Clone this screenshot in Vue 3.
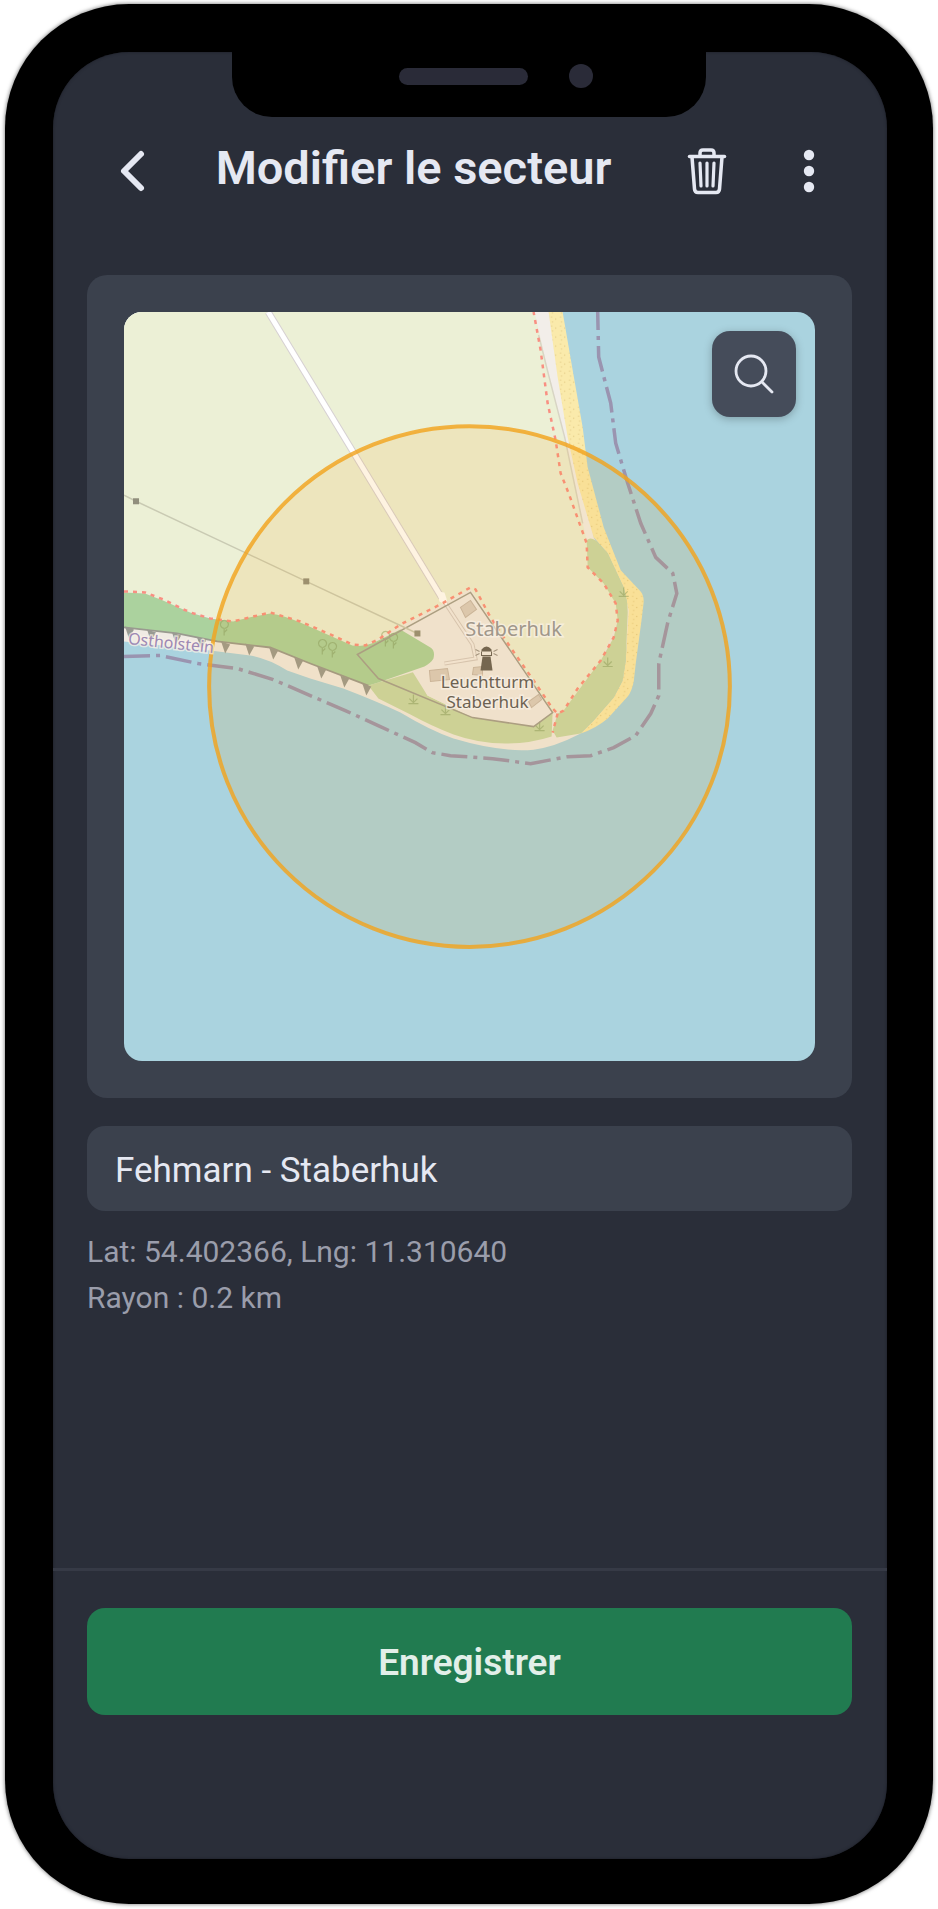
<script setup>
import { ref } from 'vue';

const name = ref('Fehmarn - Staberhuk');
const sector = { lat: 54.402366, lng: 11.31064, radius: 0.2 };

const pylons = [
    { x: 136, y: 501 },
    { x: 306, y: 581 },
    { x: 417, y: 633 }
];

const trees = [
    { x: 224, y: 628 },
    { x: 322, y: 647 },
    { x: 332, y: 650 },
    { x: 385, y: 639 },
    { x: 393, y: 641 }
];

const shrubs = [
    { x: 413, y: 703 },
    { x: 445, y: 714 },
    { x: 539, y: 730 },
    { x: 607, y: 666 },
    { x: 623, y: 596 }
];

const cliffTeeth = [
    [129, 628], [151, 631], [176, 634], [201, 639], [225, 643], [249, 645],
    [273, 649], [298, 659], [321, 668], [344, 677], [366, 685]
];

const toothPath = ([x, y]) => `M${x - 4} ${y - 2}l9 3l-5 9z`;
</script>

<template>
    <div class="page">
        <div class="phone">
            <div class="notch">
                <span class="speaker"></span>
                <span class="camera"></span>
            </div>
            <div class="screen">
                <header class="header">
                    <button class="icon-btn back" type="button" aria-label="Retour">
                        <svg width="28" height="44" viewBox="0 0 28 44">
                            <path d="M22 5L5 22l17 17" fill="none" stroke="currentColor" stroke-width="6" stroke-linecap="round" stroke-linejoin="round" />
                        </svg>
                    </button>
                    <h1 class="title">Modifier le secteur</h1>
                    <div class="actions">
                        <button class="icon-btn" type="button" aria-label="Supprimer">
                            <svg width="40" height="48" viewBox="0 0 40 48" fill="none" stroke="currentColor" stroke-linecap="round" stroke-linejoin="round">
                                <path d="M2.500 9.500H37.500" stroke-width="3.500" />
                                <path d="M13 9V6q0-3 3-3h8q3 0 3 3v3" stroke-width="3.500" />
                                <path d="M5 10l2.500 32q.3 3.500 3.500 3.500h18q3.200 0 3.500-3.500L35 10" stroke-width="3.500" />
                                <path d="M13 16l1 23M20 16v23M27 16l-1 23" stroke-width="3.200" />
                            </svg>
                        </button>
                        <button class="icon-btn" type="button" aria-label="Plus d'options">
                            <svg width="12" height="44" viewBox="0 0 12 44" fill="currentColor">
                                <circle cx="6" cy="6" r="5.200" />
                                <circle cx="6" cy="22" r="5.200" />
                                <circle cx="6" cy="38" r="5.200" />
                            </svg>
                        </button>
                    </div>
                </header>

                <main class="content">
                    <div class="map-card">
                        <div class="map">
                            <svg class="map-svg" viewBox="124 312 690 748" preserveAspectRatio="xMidYMid slice">
                                <defs>
                                    <pattern id="sand" width="9" height="9" patternUnits="userSpaceOnUse">
                                        <rect width="9" height="9" fill="#faeaab" />
                                        <circle cx="2" cy="2" r=".7" fill="#e6cf8a" />
                                        <circle cx="6" cy="4" r=".7" fill="#e6cf8a" />
                                        <circle cx="3" cy="7" r=".7" fill="#e6cf8a" />
                                    </pattern>
                                </defs>

                                <!-- eau, terre, plage -->
                                <rect x="124" y="312" width="690" height="749" fill="#aad3df" />
                                <path d="M124 312H548L593 537L630 610L622 680L580 733Q553 747 533 749Q500 752 453 738Q430 730 400 712Q377 701 343 688L310 678L287 670Q268 658 250 655L210 650L124 641Z" fill="#f0ebe4" />
                                <path d="M124 312H534L543 353L567 453L586 540L587 567L603 583L615 603L617 620L600 660L563 710L552 712L470 588L365 645L352 645L300 622L270 613L233 621L190 612L163 600L145 593L124 592Z" fill="#ecf0d6" />
                                <path d="M534 312H548L557 377L577 483L593 537L586 540L567 453Z" fill="#f2eee9" />
                                <path d="M538 335L548 375L564 437L582 523" fill="none" stroke="#d8d5c4" stroke-width="1.500" />
                                <path d="M548 312H562L572 370L582 427L587 467L603 527Q612 550 620 570L639 590Q643 594 643 601L641 618L635 663L633 681Q631 691 627 696L607 718Q595 728 580 733L593 720L613 697L622 680L625 660L628 610L623 587L607 553L593 537L577 483L567 437L557 377Z" fill="url(#sand)" />

                                <!-- herbe et bois -->
                                <path d="M586 540Q590 536 596 541L607 553L623 587Q627 600 627 612L625 660L622 680L613 697L593 720L580 733L556 737L552 730L557 713L563 710L600 660L613 637L617 620L615 603L603 583L587 567Z" fill="#c8d9a9" />
                                <path d="M368 685L415 671L427 695L472 717L533 726L552 712L551 736Q530 743 505 743Q478 743 453 734Q430 725 410 714L378 698Z" fill="#c8d9a9" />
                                <path d="M400 630L470 592L552 712L533 726L472 717L427 695L412 671Z" fill="#f0ebe6" />
                                <path d="M124 592L145 593L163 600L190 612L210 618L233 621Q252 616 270 613Q284 615 300 622L352 645Q365 647 378 640L400 629L430 647Q435 650 433 658Q431 662 424 666L378 682L368 685L310 663L270 647L217 641L177 633L124 627Z" fill="#abd29e" />
                                <path d="M124 627L177 633L217 641L270 647L310 663L368 685" fill="none" stroke="#9a9a90" stroke-width="1.800" />
                                <path v-for="tooth in cliffTeeth" :key="tooth[0]" :d="toothPath(tooth)" fill="#999a92" />

                                <g fill="none" stroke="#7f9b63" stroke-width="1.200" opacity=".5">
                                    <path v-for="t in trees" :key="t.x" :d="`M${t.x} ${t.y}v7m0-3l3-3m-3-1a4 4 0 1 1 .5 0`" />
                                    <path v-for="s in shrubs" :key="s.x" :d="`M${s.x} ${s.y}v-9m-5 9h10m-5-1l-4-4m4 4l4-4`" />
                                </g>

                                <!-- routes, clôtures, ligne électrique -->
                                <path d="M441 597L472 644L475 658L444 663L463 660" fill="none" stroke="#d3cac4" stroke-width="4" />
                                <path d="M441 597L472 644L475 658L444 663L463 660" fill="none" stroke="#f2ece8" stroke-width="2" />
                                <path d="M268 312L441 597" stroke="#d6d0d2" stroke-width="7" />
                                <path d="M268 312L441 597" stroke="#fff" stroke-width="5" />
                                <path d="M437 591l7 1l2 6l1 7l-8-4z" fill="#fff" />
                                <path d="M357 654L470 592L552 712L533 726L472 717L378 678Z" fill="none" stroke="#a29f92" stroke-width="1.500" />
                                <path d="M124 495L136 501L306 581L417 633" fill="none" stroke="#c9cab3" stroke-width="1.500" />
                                <rect v-for="p in pylons" :key="p.x" :x="p.x - 3" :y="p.y - 3" width="6" height="6" fill="#918f7d" />
                                <g fill="#d9cdc2" stroke="#c5b8ac" stroke-width="1">
                                    <path d="M460 607l10-7l6 9l-11 8z" />
                                    <path d="M429 670l18-2l2 11l-19 2z" />
                                    <path d="M473 667l9-1v9l-10-1z" />
                                    <path d="M528 701l10-7l3 5l-10 8z" />
                                </g>
                                <g fill="none" stroke="#f98f82" stroke-width="2.500" stroke-dasharray="4 5">
                                    <path d="M124 591L145 592L163 599L190 612L210 618L233 621L270 612L300 621L330 634L352 644L365 645L378 639L400 624L440 604L470 587L475 589L490 617L510 647L533 680L552 708L557 713L563 710L577 688L600 660L613 637L617 620L615 603L603 583L587 567L586 543L577 518L568 493L560 473L555 440L547 403L540 350L533 312" />
                                    <path d="M557 713L552 732" />
                                </g>
                                <path d="M124 656L160 655L198 663L237 668L273 679L310 695L345 710L380 726L415 742L432 752L450 755L492 758L530 763L567 756L590 755L613 747L635 735L650 713L658 695L658 663L667 622L676 593L672 573L655 557L640 523L627 483L615 443L610 403L598 357L597 312" fill="none" stroke="#9a94b0" stroke-width="3.500" stroke-dasharray="26 6 4 6" />

                                <!-- zone surveillée -->
                                <circle cx="469" cy="686" r="260" fill="#f59e0b" fill-opacity=".12" stroke="#f2a41f" stroke-opacity=".82" stroke-width="4" />

                                <!-- phare -->
                                <g fill="#75664f">
                                    <path d="M481 649q5-6 10 0v2h-10z" />
                                    <path d="M482 656h8l2 14h-12z" />
                                    <path d="M481 651v4h10v-4" fill="none" stroke="#75664f" />
                                    <path d="M479 651l-4-2M479 653l-4 2M493 651l4-2M493 653l4 2" stroke="#a3937c" />
                                </g>

                                <g class="label">
                                    <text x="513" y="636" font-size="20" fill="#a0978a">Staberhuk</text>
                                    <text x="487" y="687" font-size="17" fill="#6d6252">Leuchtturm</text>
                                    <text x="487" y="707" font-size="17" fill="#6d6252">Staberhuk</text>
                                    <text x="171" y="648" font-size="16" fill="#9d88b4" transform="rotate(6 171 643)">Ostholstein</text>
                                </g>
                            </svg>
                            <button class="search-btn" type="button" aria-label="Rechercher">
                                <svg width="40" height="40" viewBox="0 0 40 40" fill="none" stroke="currentColor" stroke-width="2.800" stroke-linecap="round">
                                    <circle cx="17" cy="17" r="15" />
                                    <path d="M28 28l10 10" />
                                </svg>
                            </button>
                        </div>
                    </div>

                    <input v-model="name" class="name-input" type="text" aria-label="Nom du secteur" />
                    <div class="meta">
                        <p>Lat: {{ sector.lat.toFixed(6) }}, Lng: {{ sector.lng.toFixed(6) }}</p>
                        <p>Rayon : {{ sector.radius }} km</p>
                    </div>
                </main>

                <footer class="footer">
                    <button class="save-btn" type="button">Enregistrer</button>
                </footer>
            </div>
        </div>
    </div>
</template>

<style>
body {
    background: #fff;
}
</style>

<style scoped>
* {
    box-sizing: border-box;
}

.page {
    display: flex;
    min-height: 100vh;
    padding: 4px 5px 5px;
    font-family: Roboto, "Liberation Sans", sans-serif;
    color: #e5e8f2;
}

.phone {
    position: relative;
    display: flex;
    flex: 1;
    min-width: 0;
    padding: 48px 46px 45px 48px;
    background: #000;
    border-radius: 124px;
    box-shadow: 0 0 4px rgba(0, 0, 0, 0.6);
}

.notch {
    position: absolute;
    top: 0;
    left: 50%;
    width: 474px;
    height: 113px;
    transform: translateX(-50%);
    background: #000;
    border-radius: 0 0 40px 40px;
}

.speaker {
    position: absolute;
    top: 64px;
    left: 167px;
    width: 129px;
    height: 17px;
    border-radius: 9px;
    background: #2a2b38;
}

.camera {
    position: absolute;
    top: 60px;
    left: 337px;
    width: 24px;
    height: 24px;
    border-radius: 50%;
    background: #2a2b38;
}

.screen {
    display: flex;
    flex: 1;
    flex-direction: column;
    min-width: 0;
    padding-top: 65px;
    background: #2a2e39;
    border-radius: 76px;
    box-shadow: inset 0 0 3px #1c1e27;
}

.header {
    display: flex;
    align-items: center;
    height: 108px;
    padding: 0 41px 0 56px;
}

.icon-btn {
    display: flex;
    align-items: center;
    justify-content: center;
    width: 74px;
    height: 74px;
    padding: 0;
    border: none;
    background: none;
    color: #e5e8f2;
    cursor: pointer;
}

.back {
    width: 48px;
}

.title {
    flex: 1;
    margin: 0;
    padding-bottom: 6px;
    font-size: 47px;
    font-weight: 600;
    line-height: 54px;
    text-align: center;
    white-space: nowrap;
}

.actions {
    display: flex;
    gap: 28px;
}

.content {
    flex: 1;
    padding: 50px 35px 24px 34px;
}

.map-card {
    padding: 37px;
    border-radius: 20px;
    background: #3b414d;
}

.map {
    position: relative;
    overflow: hidden;
    border-radius: 18px;
}

.map-svg {
    display: block;
    width: 100%;
    height: auto;
}

.label text {
    font-family: "Noto Sans", sans-serif;
    text-anchor: middle;
    paint-order: stroke;
    stroke: rgba(250, 242, 232, 0.7);
    stroke-width: 3px;
}

.search-btn {
    position: absolute;
    top: 19px;
    right: 19px;
    display: flex;
    align-items: center;
    justify-content: center;
    width: 84px;
    height: 86px;
    padding: 0;
    border: none;
    border-radius: 18px;
    background: #454c5a;
    color: #e5e8f2;
    box-shadow: 0 2px 8px rgba(0, 0, 0, 0.25);
    cursor: pointer;
}

.name-input {
    display: block;
    width: 100%;
    height: 85px;
    margin-top: 28px;
    padding: 4px 28px 0;
    border: none;
    border-radius: 18px;
    outline: none;
    background: #3b414d;
    color: #e5e8f2;
    font-family: inherit;
    font-size: 35px;
}

.meta {
    margin-top: 18px;
    color: #9a9dab;
    font-size: 30px;
    line-height: 46px;
}

.meta p {
    margin: 0;
}

.footer {
    padding: 37px 35px 144px 34px;
    border-top: 3px solid #363a46;
}

.save-btn {
    display: block;
    width: 100%;
    height: 107px;
    padding: 2px 0 0;
    border: none;
    border-radius: 18px;
    background: #217b50;
    color: #e2efe9;
    font-family: inherit;
    font-size: 37px;
    font-weight: 600;
    cursor: pointer;
}
</style>
